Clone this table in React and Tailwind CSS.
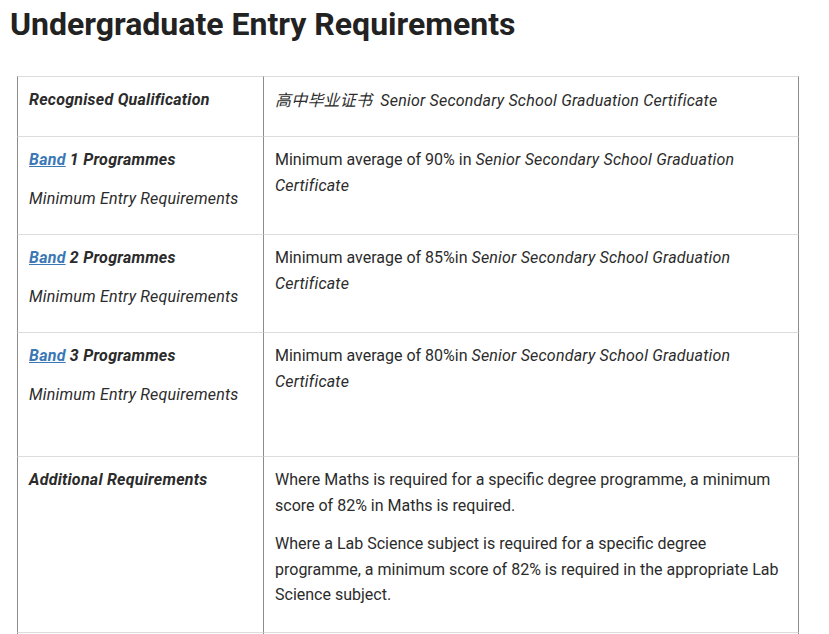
import React from "react";

const Band = ({ n }) => (
  <p className="mb-[13px] font-bold italic tracking-[0.25px]">
    <a href="#" className="text-[#3b78b5] underline">Band</a> {n} Programmes
  </p>
);

const It = ({ children }) => <em className="tracking-[0.2px]">{children}</em>;

const rows = [
  {
    h: "h-[61px]",
    left: <p className="font-bold italic tracking-[0.25px]">Recognised Qualification</p>,
    right: (
      <p className="italic tracking-[0.2px]">
        <span className="mr-[4px]" style={{ fontFamily: "'Noto Sans CJK SC', sans-serif" }}>
          高中毕业证书
        </span>{" "}
        Senior Secondary School Graduation Certificate
      </p>
    ),
  },
  {
    h: "h-[98px]",
    left: (
      <>
        <Band n={1} />
        <p className="italic tracking-[0.2px]">Minimum Entry Requirements</p>
      </>
    ),
    right: (
      <p>
        Minimum average of 90% in <It>Senior Secondary School Graduation Certificate</It>
      </p>
    ),
  },
  {
    h: "h-[98px]",
    left: (
      <>
        <Band n={2} />
        <p className="italic tracking-[0.2px]">Minimum Entry Requirements</p>
      </>
    ),
    right: (
      <p>
        Minimum average of 85%in <It>Senior Secondary School Graduation Certificate</It>
      </p>
    ),
  },
  {
    h: "h-[124px]",
    left: (
      <>
        <Band n={3} />
        <p className="italic tracking-[0.2px]">Minimum Entry Requirements</p>
      </>
    ),
    right: (
      <p>
        Minimum average of 80%in <It>Senior Secondary School Graduation Certificate</It>
      </p>
    ),
  },
  {
    h: "h-[176px]",
    left: <p className="font-bold italic tracking-[0.25px]">Additional Requirements</p>,
    right: (
      <>
        <p className="mb-[13px]">
          Where Maths is required for a specific degree programme, a minimum score of 82% in Maths is required.
        </p>
        <p>
          Where a Lab Science subject is required for a specific degree programme, a minimum score of 82% is
          required in the appropriate Lab Science subject.
        </p>
      </>
    ),
  },
];

export default function App() {
  return (
    <div
      className="bg-white min-h-screen text-[#2b2b2b] pl-[10px] pt-[2px]"
      style={{ fontFamily: "Roboto, 'Noto Sans CJK SC', sans-serif" }}
    >
      <h1 className="text-[32px] leading-[44px] font-bold text-[#222]">Undergraduate Entry Requirements</h1>

      <table className="ml-[7px] mt-[30px] w-[782px] border-separate border-spacing-0 text-[16px] leading-[25.6px]">
        <tbody>
          {rows.map((r, i) => (
            <tr key={i} className={r.h}>
              <td
                className={`w-[247px] align-top pl-[11px] pr-3 pt-[10px] border-l border-r border-b border-l-[#8c8c8c] border-r-[#8c8c8c] border-b-[#dcdcdc] ${
                  i === 0 ? "border-t border-t-[#dcdcdc]" : ""
                }`}
              >
                {r.left}
              </td>
              <td
                className={`align-top pl-[11px] pr-3 pt-[10px] border-r border-b border-r-[#8c8c8c] border-b-[#dcdcdc] ${
                  i === 0 ? "border-t border-t-[#dcdcdc]" : ""
                }`}
              >
                {r.right}
              </td>
            </tr>
          ))}
          <tr className="h-[10px]">
            <td className="border-l border-r border-l-[#8c8c8c] border-r-[#8c8c8c]"></td>
            <td className="border-r border-r-[#8c8c8c]"></td>
          </tr>
        </tbody>
      </table>
    </div>
  );
}
